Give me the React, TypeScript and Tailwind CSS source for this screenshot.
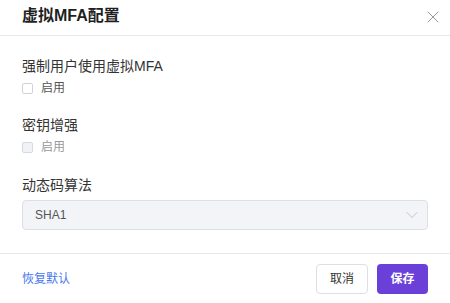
import { X, ChevronDown } from 'lucide-react';

export default function App() {
  return (
    <div
      className="w-[450px] h-[303px] bg-white flex flex-col text-[#333]"
      style={{ fontFamily: '"Liberation Sans", "Noto Sans CJK SC", sans-serif' }}
    >
      <div className="h-[36px] border-b border-[#e8e8e8] flex items-center justify-between pl-[22px] pr-[7px]">
        <h2 className="text-[16px] font-bold text-[#1f1f1f] leading-[20px] -mt-[3px]">虚拟MFA配置</h2>
        <button className="text-[#999] -mt-[1px]" aria-label="Close">
          <X size={20} strokeWidth={1.2} />
        </button>
      </div>

      <div className="flex-1 px-[22px] pt-[20px]">
        <div className="text-[14px] leading-[20px]">强制用户使用虚拟MFA</div>
        <label className="mt-[2px] h-[20px] flex items-center gap-[8px] text-[12px] text-[#555]">
          <span className="w-[11px] h-[11px] border border-[#cfd3d8] rounded-[2px] bg-white" />
          启用
        </label>

        <div className="mt-[17px] text-[14px] leading-[20px]">密钥增强</div>
        <label className="mt-[2px] h-[20px] flex items-center gap-[8px] text-[12px] text-[#999]">
          <span className="w-[11px] h-[11px] border border-[#d6dae0] rounded-[2px] bg-[#f0f2f6]" />
          启用
        </label>

        <div className="mt-[18px] text-[14px] leading-[20px]">动态码算法</div>
        <div className="mt-[5px] h-[30px] w-[406px] rounded-[4px] border border-[#dcdfe6] bg-[#f2f4f8] flex items-center justify-between pl-[12px] pr-[5px]">
          <span className="text-[12px] text-[#555]">SHA1</span>
          <ChevronDown size={20} strokeWidth={1} className="text-[#b8bcc4]" />
        </div>
      </div>

      <div className="h-[50px] border-t border-[#e8e8e8] flex items-center justify-between px-[22px]">
        <button className="text-[12px] text-[#4a78ee]">恢复默认</button>
        <div className="flex items-center gap-[9px]">
          <button className="h-[30px] w-[52px] rounded-[4px] border border-[#dcdfe6] bg-white text-[12px] text-[#333]">
            取消
          </button>
          <button className="h-[30px] w-[51px] rounded-[4px] bg-[#6a40d9] text-[12px] font-bold text-white">
            保存
          </button>
        </div>
      </div>
    </div>
  );
}
